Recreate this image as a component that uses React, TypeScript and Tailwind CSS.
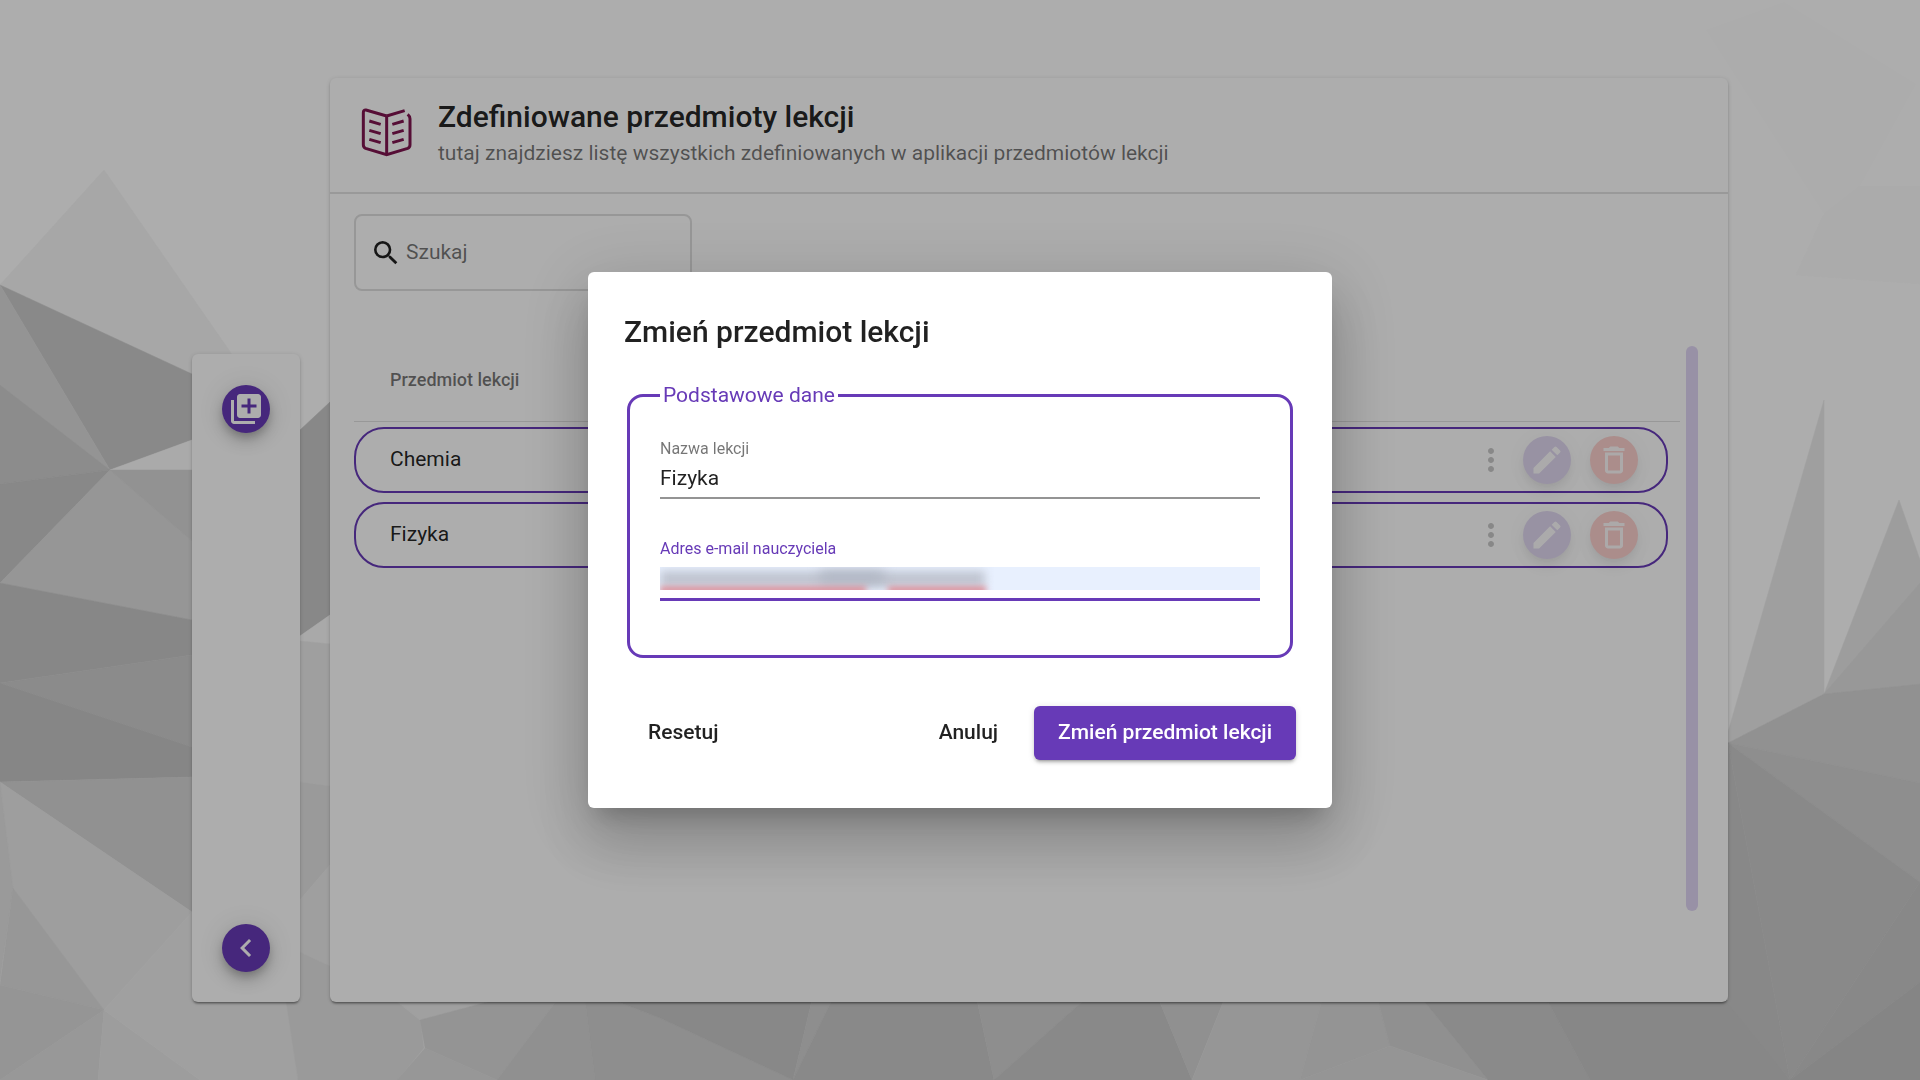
import React, { useState } from "react";
import {
  MdChevronLeft,
  MdDeleteOutline,
  MdEdit,
  MdLibraryAdd,
  MdMoreVert,
  MdSearch,
} from "react-icons/md";

const facets: [string, string][] = [
  ["104,170 0,285 192,374 240,366", "#f6f6f6"],
  ["0,285 192,374 192,440 110,470", "#cbcbcb"],
  ["110,470 192,440 192,470", "#fbfbfb"],
  ["0,285 110,470 0,385", "#dbdbdb"],
  ["0,385 110,470 0,484", "#cecece"],
  ["0,484 110,470 0,583", "#c9c9c9"],
  ["0,583 110,470 192,541 192,620", "#dddddd"],
  ["110,470 192,470 192,541", "#d7d7d7"],
  ["0,583 192,620 192,655 0,683", "#c8c8c8"],
  ["0,683 192,655 192,747", "#cdcdcd"],
  ["0,683 192,747 192,777 0,782", "#c6c6c6"],
  ["0,782 192,777 192,912", "#d6d6d6"],
  ["0,782 192,912 104,1010 13,888", "#e9e9e9"],
  ["0,782 13,888 0,980", "#e3e3e3"],
  ["13,888 104,1010 0,985", "#dfdfdf"],
  ["0,985 104,1010 0,1080", "#dcdcdc"],
  ["0,1080 104,1010 98,1080", "#e0e0e0"],
  ["104,1010 98,1080 200,1080", "#e8e8e8"],
  ["104,1010 192,912 288,1000 298,1080 200,1080", "#ececec"],
  ["300,430 330,402 330,615 300,636", "#c9c9c9"],
  ["300,636 330,615 330,644 300,641", "#f9f9f9"],
  ["300,641 330,644 330,786 300,782", "#ebebeb"],
  ["300,782 330,786 330,865 300,900", "#e4e4e4"],
  ["300,900 330,865 330,966 300,952", "#ebebeb"],
  ["300,952 330,966 400,1002 288,1002", "#e4e4e4"],
  ["286,1000 400,1002 420,1020 424,1048 397,1080 298,1080", "#e4e4e4"],
  ["395,1000 420,1020 495,1000", "#ececec"],
  ["420,1020 495,1000 557,1000 497,1080 425,1048", "#dadada"],
  ["425,1048 497,1080 397,1080", "#dfdfdf"],
  ["557,1000 585,1000 595,1080 497,1080", "#d5d5d5"],
  ["585,1000 613,1000 660,1018 793,1080 595,1080", "#d1d1d1"],
  ["613,1000 812,1000 793,1080 660,1018", "#c9c9c9"],
  ["812,1000 832,1000 793,1080", "#d1d1d1"],
  ["832,1000 977,1000 994,1080 793,1080", "#cacaca"],
  ["977,1000 1084,1000 994,1080", "#d1d1d1"],
  ["1084,1000 1159,1000 1192,1080 994,1080", "#cacaca"],
  ["1159,1000 1224,1000 1192,1080", "#d4d4d4"],
  ["1224,1000 1322,1000 1300,1080 1192,1080", "#dedede"],
  ["1322,1000 1378,1000 1390,1046 1300,1080", "#dadada"],
  ["1378,1000 1423,1000 1488,1080 1390,1046", "#d5d5d5"],
  ["1390,1046 1488,1080 1300,1080", "#dcdcdc"],
  ["1423,1000 1547,1000 1590,1080 1488,1080", "#cccccc"],
  ["1547,1000 1730,1000 1790,1080 1590,1080", "#c7c7c7"],
  ["1824,400 1728,732 1728,743 1824,694", "#ebebeb"],
  ["1899,500 1824,694 1920,684 1920,560", "#e8e8e8"],
  ["1824,694 1920,583 1920,684", "#e1e1e1"],
  ["1824,694 1920,684 1920,783 1728,743", "#d6d6d6"],
  ["1728,743 1920,783 1920,882", "#d1d1d1"],
  ["1728,743 1920,882 1790,1080", "#cbcbcb"],
  ["1728,743 1790,1080 1728,1004", "#c9c9c9"],
  ["1920,882 1920,982 1790,1080", "#c9c9c9"],
  ["1920,982 1920,1080 1790,1080", "#c5c5c5"],
  ["1784,2 1916,84 1860,186 1824,214 1706,30", "#fefefe"],
  ["1860,186 1920,186 1920,284 1796,275 1824,214", "#fdfdfd"],
];

function Backdrop() {
  return (
    <svg
      className="absolute inset-0 h-full w-full"
      viewBox="0 0 1920 1080"
      preserveAspectRatio="xMidYMid slice"
      aria-hidden="true"
    >
      {facets.map(([points, fill]) => (
        <polygon key={points} points={points} fill={fill} stroke={fill} strokeWidth="0.5" />
      ))}
    </svg>
  );
}

function BookIcon() {
  return (
    <svg
      className="size-[54px] shrink-0"
      viewBox="0 0 162 162"
      fill="none"
      stroke="#7f1650"
      strokeWidth="9"
      aria-hidden="true"
    >
      <path d="M80 30 18 12Q10 11 10 20V116Q10 124 17 127L80 146 143 127Q150 124 150 116V38Q150 31 143 25" />
      <path d="M80 30V146M80 30 134 14" />
      <path d="M28 45 62 55M28 73 62 83M28 100 62 110M97 55 131 45M97 83 131 73M97 110 131 100" />
    </svg>
  );
}

const fab =
  "flex size-12 items-center justify-center rounded-full text-4xl text-white shadow-[0_5px_8px_-2px_rgba(0,0,0,0.2),0_9px_15px_0_rgba(0,0,0,0.14),0_2px_27px_0_rgba(0,0,0,0.12)]";
const fadedFab =
  "flex size-12 items-center justify-center rounded-full text-4xl text-white shadow-[0_5px_8px_-2px_rgba(0,0,0,0.06),0_9px_15px_0_rgba(0,0,0,0.04),0_2px_27px_0_rgba(0,0,0,0.03)]";
const card =
  "rounded-md bg-white shadow-[0_3px_2px_-2px_rgba(0,0,0,0.3),0_2px_2px_0_rgba(0,0,0,0.14),0_1px_4px_0_rgba(0,0,0,0.16)]";

function Sidebar() {
  return (
    <nav className={`${card} flex h-[60vh] shrink-0 flex-col items-center justify-between px-[30px] pt-[31px] pb-[30px]`}>
      <button type="button" aria-label="Dodaj" className={`${fab} bg-[#673ab7]`}>
        <MdLibraryAdd />
      </button>
      <button type="button" aria-label="Wstecz" className={`${fab} bg-[#673ab7]`}>
        <MdChevronLeft />
      </button>
    </nav>
  );
}

function SubjectRow({ name }: { name: string }) {
  return (
    <tr className="mr-3 flex h-[66px] items-center rounded-[30px] border-2 border-[#673ab7] pr-7 pl-[34px]">
      <td className="flex-1">{name}</td>
      <td className="flex items-center">
        <button type="button" aria-label="Więcej" className="mr-3.5 text-4xl text-[#c9c9c9]">
          <MdMoreVert />
        </button>
        <button type="button" aria-label="Edytuj" className={`${fadedFab} mr-[19px] bg-[#e1d8f1]`}>
          <MdEdit className="opacity-90" />
        </button>
        <button type="button" aria-label="Usuń" className={`${fadedFab} bg-[#fdd0cd]`}>
          <MdDeleteOutline className="opacity-90" />
        </button>
      </td>
    </tr>
  );
}

function Subjects() {
  return (
    <main className={`${card} flex flex-1 flex-col`}>
      <header className="flex items-center gap-6 border-b-2 border-[#e2e2e2] px-[30px] pt-[21px] pb-[25px]">
        <BookIcon />
        <div className="flex flex-col gap-1">
          <h1 className="text-[30px] leading-9 font-medium">Zdefiniowane przedmioty lekcji</h1>
          <p className="text-[21px] leading-7 text-black/54">
            tutaj znajdziesz listę wszystkich zdefiniowanych w aplikacji przedmiotów lekcji
          </p>
        </div>
      </header>
      <div className="flex flex-1 flex-col pt-5 pr-[30px] pb-[83px] pl-6">
        <label className="flex h-[77px] w-[338px] items-center gap-1 rounded-lg border-2 border-[#dfdfdf] pl-3.5">
          <MdSearch className="size-8 shrink-0" />
          <input
            type="search"
            aria-label="Szukaj"
            placeholder="Szukaj"
            className="w-full min-w-0 bg-transparent text-[21px] outline-none placeholder:text-black/54"
          />
        </label>
        <div className="mt-[47px] flex flex-1 gap-1.5">
          <table className="block flex-1 text-left text-[21px]">
            <thead className="block border-b border-black/12">
              <tr className="flex h-[83px] items-center pl-9">
                <th className="text-lg font-medium text-black/54">Przedmiot lekcji</th>
              </tr>
            </thead>
            <tbody className="flex flex-col gap-[9px] pt-[5px]">
              <SubjectRow name="Chemia" />
              <SubjectRow name="Fizyka" />
            </tbody>
          </table>
          <div className="my-2 w-3 rounded-full bg-[#e1d6f5]" />
        </div>
      </div>
    </main>
  );
}

function SubjectDialog() {
  const [name, setName] = useState("Fizyka");
  const [email, setEmail] = useState("");
  const button = "h-[54px] rounded-md px-6 text-[21px] font-medium";
  return (
    <div className="fixed inset-0 flex items-center justify-center bg-black/32">
      <form
        role="dialog"
        aria-labelledby="dialog-title"
        className="w-[744px] max-w-full rounded-md bg-white px-9 pt-9 pb-12 shadow-[0_16px_22px_-10px_rgba(0,0,0,0.2),0_36px_57px_4px_rgba(0,0,0,0.14),0_14px_69px_12px_rgba(0,0,0,0.12)]"
      >
        <h2 id="dialog-title" className="text-[30px] leading-12 font-medium">
          Zmień przedmiot lekcji
        </h2>
        <fieldset className="mx-[3px] mt-[25px] rounded-2xl border-3 border-[#673ab7] px-[30px] pt-7 pb-[54px]">
          <legend className="px-[3px] text-[21px] leading-7 text-[#673ab7]">Podstawowe dane</legend>
          <div className="flex flex-col border-b-2 border-[#949494] pb-[7px]">
            <label htmlFor="name" className="text-base leading-6 text-black/54">
              Nazwa lekcji
            </label>
            <input
              id="name"
              value={name}
              onChange={(e) => setName(e.target.value)}
              className="mt-1.5 h-[23px] text-[21px] leading-[23px] outline-none"
            />
          </div>
          <div className="mt-[38px] flex flex-col border-b-3 border-[#673ab7] pb-2">
            <label htmlFor="email" className="text-base leading-6 text-[#673ab7]">
              Adres e-mail nauczyciela
            </label>
            <div className="relative mt-1.5 flex overflow-hidden bg-[#e8f0fe]">
              <input
                id="email"
                type="email"
                value={email}
                onChange={(e) => setEmail(e.target.value)}
                className="h-[23px] w-full text-[21px] outline-none"
              />
              <div className="pointer-events-none absolute top-1 left-0 h-4 w-[325px] bg-[#bfc4d0] blur-[5px]" />
              <div className="pointer-events-none absolute top-1 left-40 h-3 w-16 bg-[#b0b6c3] blur-[6px]" />
              <div className="pointer-events-none absolute top-5 left-0 h-1.5 w-[206px] bg-[#dc7d86] blur-[3px]" />
              <div className="pointer-events-none absolute top-5 left-[228px] h-1.5 w-[98px] bg-[#dc7d86] blur-[3px]" />
            </div>
          </div>
        </fieldset>
        <div className="mt-12 flex items-center">
          <button type="reset" className={button}>
            Resetuj
          </button>
          <button type="button" className={`${button} mr-3 ml-auto`}>
            Anuluj
          </button>
          <button
            type="button"
            className={`${button} bg-[#673ab7] text-white shadow-[0_4px_2px_-3px_rgba(0,0,0,0.2),0_3px_3px_0_rgba(0,0,0,0.14),0_1px_7px_0_rgba(0,0,0,0.12)]`}
          >
            Zmień przedmiot lekcji
          </button>
        </div>
      </form>
    </div>
  );
}

export default function App() {
  return (
    <div className="relative flex min-h-screen bg-white font-[Roboto,sans-serif] text-black/87">
      <Backdrop />
      <div className="relative flex flex-1 items-stretch gap-[30px] px-[10%] py-[78px]">
        <div className="flex items-end">
          <Sidebar />
        </div>
        <Subjects />
      </div>
      <SubjectDialog />
    </div>
  );
}
